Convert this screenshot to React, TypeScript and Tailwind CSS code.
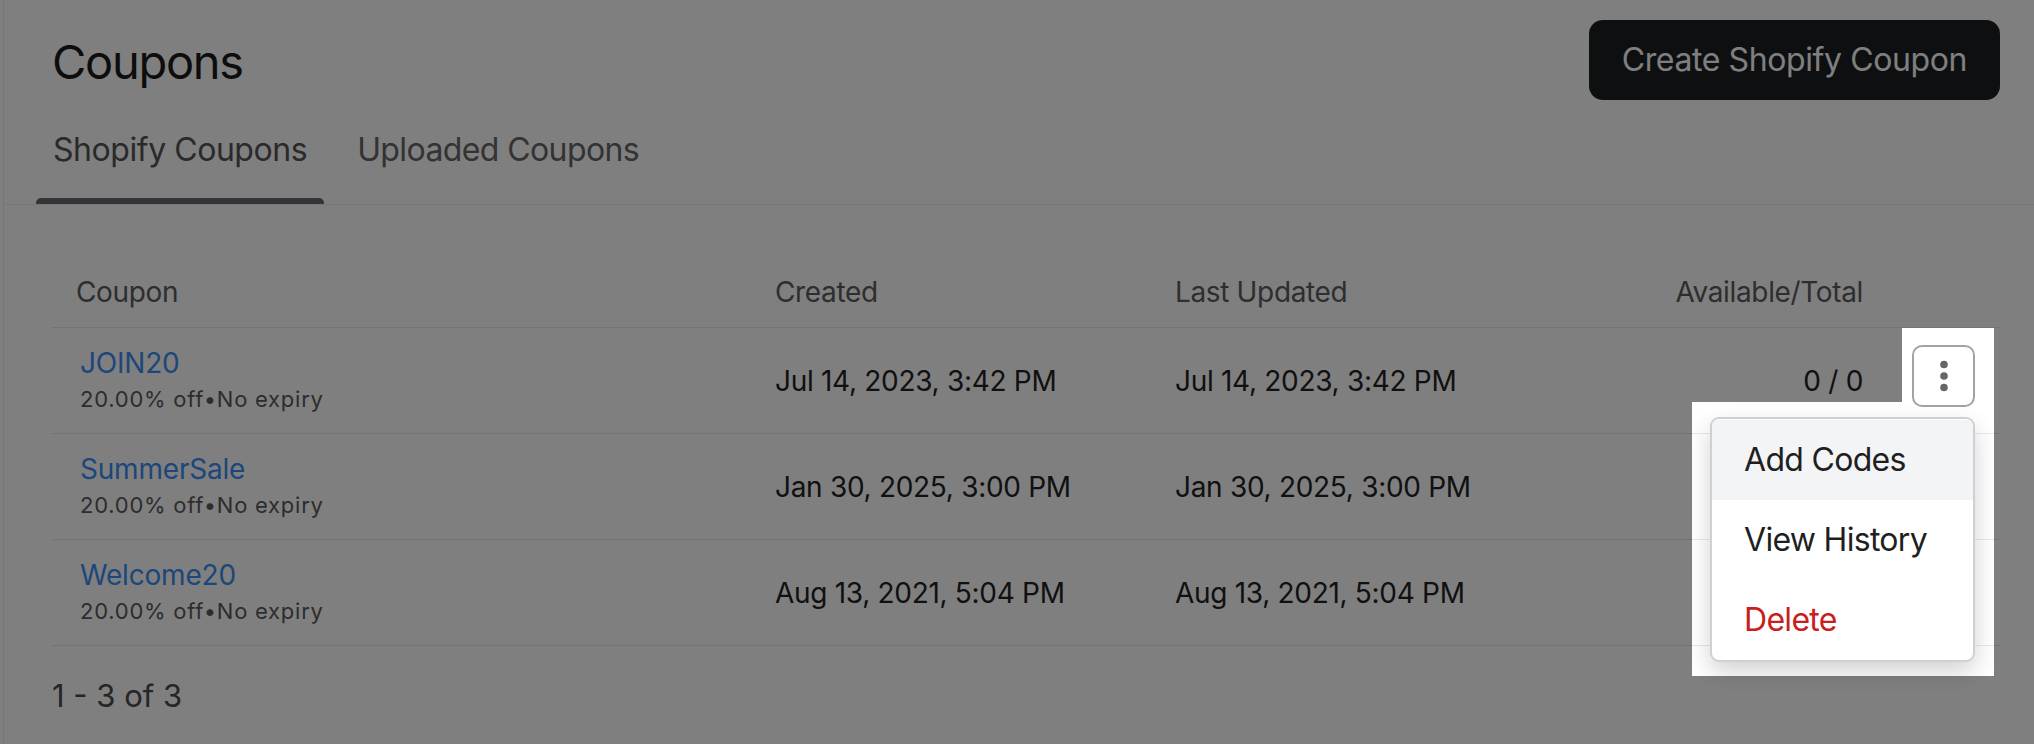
import React from "react";

const rows = [
  { code: "JOIN20", created: "Jul 14, 2023, 3:42 PM", updated: "Jul 14, 2023, 3:42 PM", avail: "0 / 0" },
  { code: "SummerSale", created: "Jan 30, 2025, 3:00 PM", updated: "Jan 30, 2025, 3:00 PM", avail: "" },
  { code: "Welcome20", created: "Aug 13, 2021, 5:04 PM", updated: "Aug 13, 2021, 5:04 PM", avail: "" },
];

function Kebab() {
  return (
    <svg width="10" height="32" viewBox="0 0 10 32" aria-hidden="true">
      <circle cx="5" cy="4.5" r="3.8" fill="#666" />
      <circle cx="5" cy="16" r="3.8" fill="#666" />
      <circle cx="5" cy="27.5" r="3.8" fill="#666" />
    </svg>
  );
}

export default function App() {
  return (
    <div className="relative h-[744px] w-[2034px] overflow-hidden bg-white font-['Inter',sans-serif]">
      <div className="flex h-full">
        <div className="w-[3px] shrink-0" />
        <main className="flex flex-1 flex-col border-l border-[#eeeeee]">
          <header className="mt-[20px] flex h-[80px] items-center justify-between pl-[48px] pr-[34px]">
            <h1 className="mt-[2px] text-[47px] leading-none tracking-[-1.3px] text-[#1a1a1a]">Coupons</h1>
            <button className="h-[80px] rounded-[14px] bg-[#1c1e22] px-[33px] text-[32px] tracking-[-0.4px] text-white">
              Create Shopify Coupon
            </button>
          </header>

          <nav className="flex gap-[16px] border-b border-[#eeeeee] pl-[32px] pt-[26px]">
            <div className="flex flex-col">
              <span className="px-[17px] text-[32px] leading-[48px] tracking-[-0.45px] text-[#545454]">Shopify Coupons</span>
              <div className="mt-[24px] h-[6px] rounded-t-[5px] bg-[#66696e]" />
            </div>
            <div className="flex flex-col">
              <span className="px-[17px] text-[32px] leading-[48px] tracking-[-0.6px] text-[#666666]">Uploaded Coupons</span>
              <div className="mt-[24px] h-[6px]" />
            </div>
          </nav>

          <section className="ml-[48px] mr-[34px] mt-[50px]">
            <div className="grid grid-cols-[699px_400px_400px_336px_113px] border-b border-[#e8e8e8] pb-[15px] pt-[17px] text-[28px] leading-[40px] tracking-[-0.35px] text-[#5c5c5c]">
              <div className="pl-[24px]">Coupon</div>
              <div className="pl-[24px]">Created</div>
              <div className="pl-[24px]">Last Updated</div>
              <div className="pr-[24px] text-right">Available/Total</div>
              <div />
            </div>

            {rows.map((r, i) => (
              <div
                key={r.code}
                className="grid h-[106px] grid-cols-[699px_400px_400px_336px_113px] items-center border-b border-[#e8e8e8] text-[28px] tracking-[-0.3px] text-[#222222]"
              >
                <div className="flex flex-col pl-[28px] pt-[2px]">
                  <span className="text-[28px] leading-[36px] tracking-[-0.2px] text-[#3b8ef5]">{r.code}</span>
                  <span className="text-[22px] leading-[37px] tracking-[0.75px] text-[#5a5a5a]">
                    20.00% off•No expiry
                  </span>
                </div>
                <div className="pl-[24px]">{r.created}</div>
                <div className="pl-[24px]">{r.updated}</div>
                <div className="pr-[24px] text-right">{r.avail}</div>
                <div className="flex justify-center">
                  <div className="relative mb-[9px]">
                    <button className="flex h-[62px] w-[63px] items-center justify-center rounded-[10px] border-2 border-[#a3a3a3] bg-white">
                      <Kebab />
                    </button>
                    {i === 0 && (
                      <div className="absolute right-0 top-[72px] z-10 w-[265px] overflow-hidden rounded-[9px] border-2 border-[#cdd1d6] bg-white pt-[1px] shadow-[0_10px_24px_rgba(0,0,0,0.18)]">
                        <div className="flex h-[80px] items-center bg-[#f3f4f6] px-[32px] text-[32px] tracking-[-0.7px] text-[#1f1f1f]">
                          Add Codes
                        </div>
                        <div className="flex h-[80px] items-center px-[32px] text-[32px] tracking-[-0.7px] text-[#1f1f1f]">
                          View History
                        </div>
                        <div className="flex h-[80px] items-center px-[32px] text-[32px] tracking-[-0.7px] text-[#c8201e]">
                          Delete
                        </div>
                      </div>
                    )}
                  </div>
                </div>
              </div>
            ))}
          </section>

          <div className="mt-[30px] pl-[48px] text-[31px] leading-[40px] text-[#4c4c4c]">1 - 3 of 3</div>
        </main>
      </div>

      <div className="pointer-events-none absolute inset-0 z-20 bg-black/50 [clip-path:polygon(evenodd,0_0,100%_0,100%_100%,0_100%,0_0,1902px_328px,1994px_328px,1994px_676px,1692px_676px,1692px_402px,1902px_402px,1902px_328px,0_0)]" />
    </div>
  );
}
